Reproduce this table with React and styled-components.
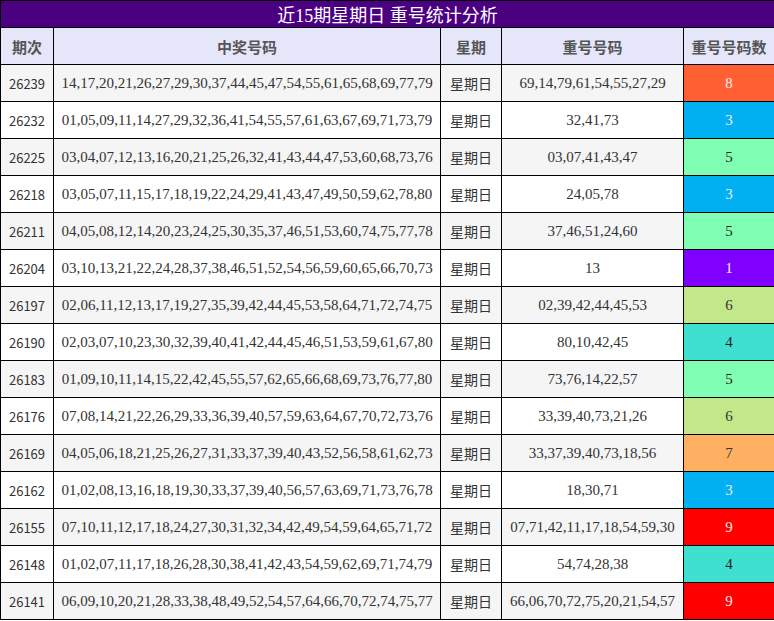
import styled, { createGlobalStyle } from 'styled-components'

const GlobalStyle = createGlobalStyle`
  body {
    margin: 0;
    background: #fff;
  }
`

const Table = styled.table`
  width: 774px;
  border-collapse: collapse;
  table-layout: fixed;
  font-family: "Liberation Serif", "Noto Sans CJK SC", serif;
  color: #333;
`

const Title = styled.th`
  height: 26px;
  padding: 0;
  background: #4b0082;
  color: #fff;
  font-family: "Liberation Serif", "Noto Sans CJK SC", sans-serif;
  font-weight: normal;
  font-size: 18px;
  border: 1px solid #000;
`

const Head = styled.th`
  height: 36px;
  padding: 0;
  background: #e6e6fa;
  color: #555;
  font-family: "Noto Sans CJK SC", sans-serif;
  font-size: 15px;
  font-weight: bold;
  border: 1px solid #000;
`

const Row = styled.tr`
  background: ${p => (p.$odd ? '#f5f5f5' : '#fff')};
`

const Cell = styled.td`
  height: 36px;
  padding: 0;
  text-align: center;
  font-size: ${p => p.$size || 15}px;
  border: 1px solid #000;
  white-space: nowrap;
  font-family: ${p =>
    p.$cjk ? '"Noto Sans CJK SC", sans-serif' : '"Liberation Serif", serif'};
`

const CountCell = styled(Cell)`
  background: ${p => p.$bg};
  color: ${p => p.$fg};
`

const countColors = {
  1: ['#8000ff', '#eee'],
  3: ['#00b0f0', '#eee'],
  4: ['#40e0d0', '#222'],
  5: ['#80ffb4', '#222'],
  6: ['#c3e88a', '#333'],
  7: ['#ffb061', '#333'],
  8: ['#ff5f33', '#eee'],
  9: ['#ff0000', '#eee'],
}

const rows = [
  ['26239', '14,17,20,21,26,27,29,30,37,44,45,47,54,55,61,65,68,69,77,79', '69,14,79,61,54,55,27,29', 8],
  ['26232', '01,05,09,11,14,27,29,32,36,41,54,55,57,61,63,67,69,71,73,79', '32,41,73', 3],
  ['26225', '03,04,07,12,13,16,20,21,25,26,32,41,43,44,47,53,60,68,73,76', '03,07,41,43,47', 5],
  ['26218', '03,05,07,11,15,17,18,19,22,24,29,41,43,47,49,50,59,62,78,80', '24,05,78', 3],
  ['26211', '04,05,08,12,14,20,23,24,25,30,35,37,46,51,53,60,74,75,77,78', '37,46,51,24,60', 5],
  ['26204', '03,10,13,21,22,24,28,37,38,46,51,52,54,56,59,60,65,66,70,73', '13', 1],
  ['26197', '02,06,11,12,13,17,19,27,35,39,42,44,45,53,58,64,71,72,74,75', '02,39,42,44,45,53', 6],
  ['26190', '02,03,07,10,23,30,32,39,40,41,42,44,45,46,51,53,59,61,67,80', '80,10,42,45', 4],
  ['26183', '01,09,10,11,14,15,22,42,45,55,57,62,65,66,68,69,73,76,77,80', '73,76,14,22,57', 5],
  ['26176', '07,08,14,21,22,26,29,33,36,39,40,57,59,63,64,67,70,72,73,76', '33,39,40,73,21,26', 6],
  ['26169', '04,05,06,18,21,25,26,27,31,33,37,39,40,43,52,56,58,61,62,73', '33,37,39,40,73,18,56', 7],
  ['26162', '01,02,08,13,16,18,19,30,33,37,39,40,56,57,63,69,71,73,76,78', '18,30,71', 3],
  ['26155', '07,10,11,12,17,18,24,27,30,31,32,34,42,49,54,59,64,65,71,72', '07,71,42,11,17,18,54,59,30', 9],
  ['26148', '01,02,07,11,17,18,26,28,30,38,41,42,43,54,59,62,69,71,74,79', '54,74,28,38', 4],
  ['26141', '06,09,10,20,21,28,33,38,48,49,52,54,57,64,66,70,72,74,75,77', '66,06,70,72,75,20,21,54,57', 9],
]

export default function App() {
  return (
    <>
      <GlobalStyle />
      <Table>
        <colgroup>
          <col style={{ width: 53 }} />
          <col style={{ width: 387 }} />
          <col style={{ width: 61 }} />
          <col style={{ width: 182 }} />
          <col style={{ width: 91 }} />
        </colgroup>
        <thead>
          <tr>
            <Title colSpan={5}>近15期星期日 重号统计分析</Title>
          </tr>
          <tr>
            <Head>期次</Head>
            <Head>中奖号码</Head>
            <Head>星期</Head>
            <Head>重号号码</Head>
            <Head>重号号码数</Head>
          </tr>
        </thead>
        <tbody>
          {rows.map(([issue, nums, repeats, count], i) => {
            const [bg, fg] = countColors[count]
            return (
              <Row key={issue} $odd={i % 2 === 0}>
                <Cell $cjk $size={13}>{issue}</Cell>
                <Cell>{nums}</Cell>
                <Cell $cjk $size={14}>星期日</Cell>
                <Cell>{repeats}</Cell>
                <CountCell $bg={bg} $fg={fg}>{count}</CountCell>
              </Row>
            )
          })}
        </tbody>
      </Table>
    </>
  )
}
